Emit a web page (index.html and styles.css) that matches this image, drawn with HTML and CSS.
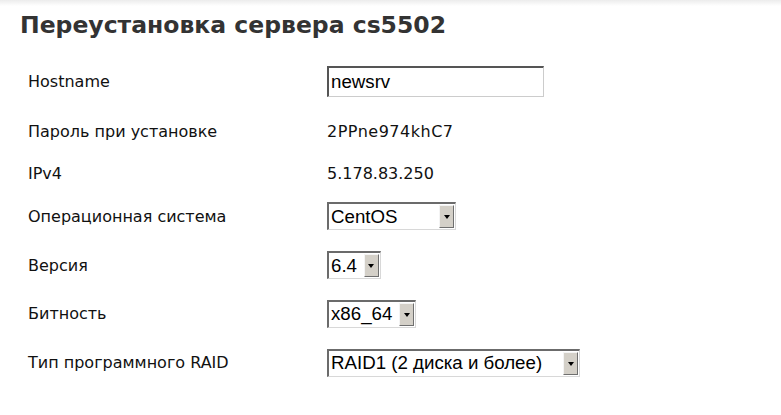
FILE: index.html
```html
<!DOCTYPE html>
<html lang="ru">
<head>
<meta charset="utf-8">
<title>Переустановка сервера cs5502</title>
<link rel="stylesheet" href="styles.css">
</head>
<body>
<h1 class="title">Переустановка сервера cs5502</h1>
<div class="form">
  <div class="label">Hostname</div>
  <div class="value"><input class="text-input" type="text" value="newsrv"></div>

  <div class="label">Пароль при установке</div>
  <div class="value password">2PPne974khC7</div>

  <div class="label">IPv4</div>
  <div class="value">5.178.83.250</div>

  <div class="label">Операционная система</div>
  <div class="value"><span class="select w-os"><span class="select-text">CentOS</span><span class="select-btn"><span class="tri"></span></span></span></div>

  <div class="label">Версия</div>
  <div class="value"><span class="select"><span class="select-text">6.4</span><span class="select-btn"><span class="tri"></span></span></span></div>

  <div class="label">Битность</div>
  <div class="value"><span class="select"><span class="select-text">x86_64</span><span class="select-btn"><span class="tri"></span></span></span></div>

  <div class="label">Тип программного RAID</div>
  <div class="value"><span class="select w-raid"><span class="select-text">RAID1 (2 диска и более)</span><span class="select-btn"><span class="tri"></span></span></span></div>
</div>
</body>
</html>
```
FILE: styles.css
```css
html, body {
  margin: 0;
  padding: 0;
}
body {
  background: linear-gradient(#ececec, #ffffff 6px) no-repeat, #ffffff;
  font-family: "DejaVu Sans", "Noto Sans", sans-serif;
  color: #111;
}
.title {
  margin: 0;
  padding: 9px 0 0 20px;
  height: 48px;
  box-sizing: border-box;
  font-size: 23.5px;
  font-weight: bold;
  color: #333333;
  line-height: 32px;
}
.form {
  display: grid;
  grid-template-columns: 299px auto;
  grid-template-rows: 49px 50px 35px 50px 48px 49px 49px;
  padding-left: 28px;
  margin-top: 9px;
  align-items: center;
}
.label, .value {
  font-size: 16px;
  color: #111;
  display: flex;
  align-items: center;
}
.password {
  letter-spacing: 0.5px;
}
.text-input {
  width: 217px;
  height: 31px;
  box-sizing: border-box;
  margin: 0;
  padding: 0 2px;
  border-style: solid;
  border-width: 2px 1px 1px 2px;
  border-color: #555 #ccc #ccc #555;
  font-family: "Liberation Sans", Arial, sans-serif;
  font-size: 18.7px;
  color: #000;
  outline: none;
  background: #fff;
}
.select {
  display: inline-flex;
  align-items: stretch;
  height: 28px;
  box-sizing: border-box;
  border-style: solid;
  border-width: 2px 1px 1px 2px;
  border-color: #6b6b6b #d8d8d8 #d8d8d8 #6b6b6b;
  background: #fff;
  font-family: "Liberation Sans", Arial, sans-serif;
  font-size: 18.7px;
  color: #000;
}
.select-text {
  display: flex;
  align-items: center;
  padding: 0 6px 0 2px;
  flex: 1;
  white-space: nowrap;
}
.select-btn {
  width: 15px;
  box-sizing: border-box;
  margin: 1px;
  background: #d4d0c8;
  border-style: solid;
  border-width: 1px;
  border-color: #f4f4f4 #6f6f6f #6f6f6f #f4f4f4;
  display: flex;
  align-items: center;
  justify-content: center;
}
.tri {
  width: 0;
  height: 0;
  border-left: 3.5px solid transparent;
  border-right: 3.5px solid transparent;
  border-top: 4px solid #000;
  margin-top: 1px;
}
.w-os { width: 129px; }
.w-raid { width: 253px; }
```
